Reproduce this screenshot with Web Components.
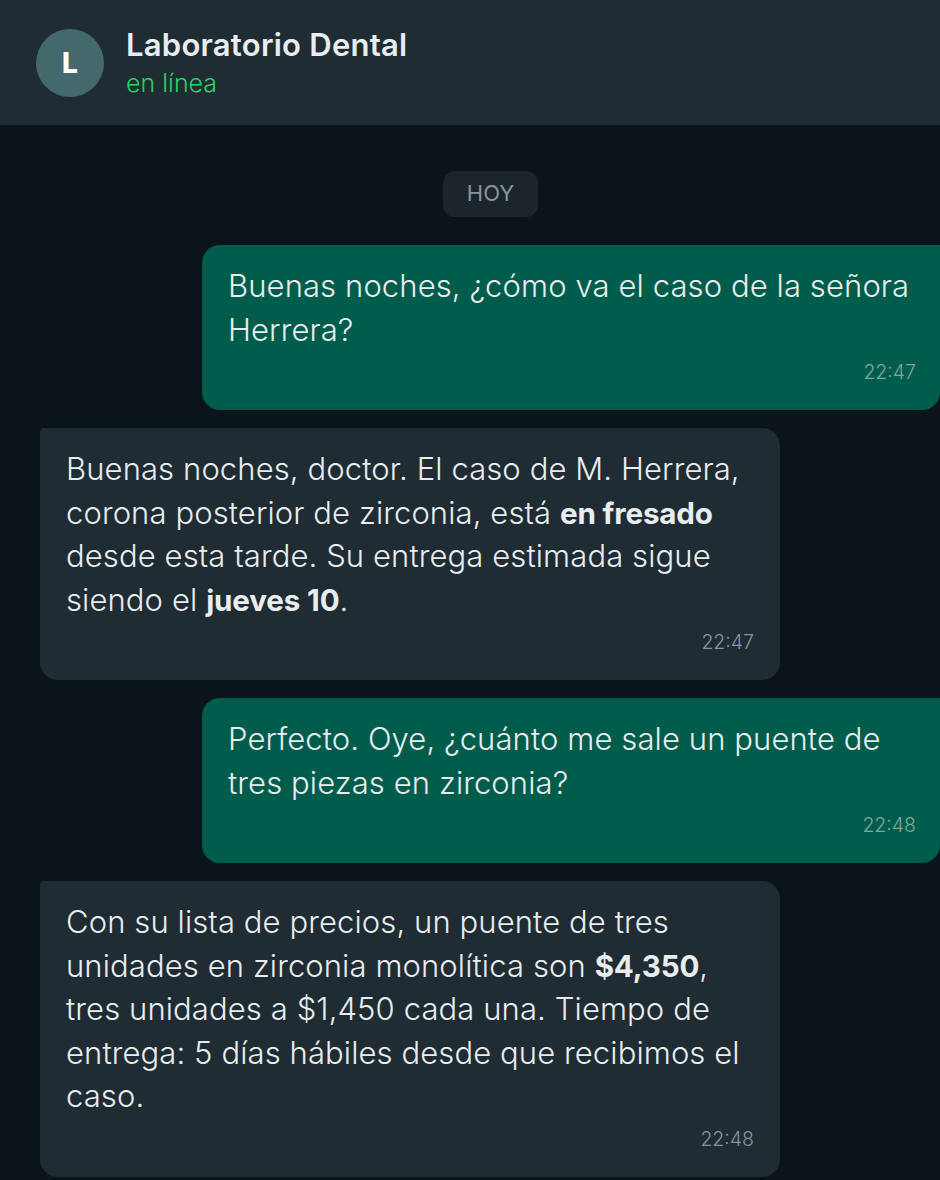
<!doctype html>
<html><head><meta charset="utf-8"><style>
html,body{margin:0;background:#0b141a;height:1180px;overflow:hidden}
body{font-family:"Inter","Lato",sans-serif}
</style></head><body>
<chat-app>
<chat-header slot="header" name="Laboratorio Dental" status="en línea" initial="L"></chat-header>
<chat-day>HOY</chat-day>
<chat-msg out time="22:47">Buenas noches, ¿cómo va el caso de la señora Herrera?</chat-msg>
<chat-msg time="22:47">Buenas noches, doctor. El caso de M. Herrera, corona posterior de zirconia, está <b>en fresado</b> desde esta tarde. Su entrega estimada sigue siendo el <b>jueves 10</b>.</chat-msg>
<chat-msg out time="22:48">Perfecto. Oye, ¿cuánto me sale un puente de tres piezas en zirconia?</chat-msg>
<chat-msg time="22:48">Con su lista de precios, un puente de tres unidades en zirconia monolítica son <b>$4,350</b>, tres unidades a $1,450 cada una. Tiempo de entrega: 5 días hábiles desde que recibimos el caso.</chat-msg>
</chat-app>
<script>
function def(name,css,html){customElements.define(name,class extends HTMLElement{connectedCallback(){if(this.shadowRoot)return;const r=this.attachShadow({mode:'open'});r.innerHTML='<style>'+css+'</style>'+(typeof html==='function'?html(this):html);}});}
const esc=s=>String(s||'').replace(/[&<>]/g,c=>({'&':'&amp;','<':'&lt;','>':'&gt;'}[c]));
def('chat-app',`:host{display:flex;flex-direction:column;width:940px;height:1180px;overflow:hidden;background:#0b141a;color:#e9edef}
.log{display:flex;flex-direction:column;gap:18px;padding:46px 0 0 40px}`,
`<slot name="header"></slot><div class="log"><slot></slot></div>`);
def('chat-header',`:host{display:flex;align-items:center;gap:22px;height:125px;box-sizing:border-box;padding:0 36px;background:#202c33}
.av{width:68px;height:68px;border-radius:50%;background:#44696d;display:flex;align-items:center;justify-content:center;color:#fff;font-weight:800;font-size:28px}
.tx{padding-top:2px}
.n{font-size:31px;font-weight:600;line-height:36px;color:#e9edef;letter-spacing:.25px;margin-top:-2px}
.s{font-size:25px;font-weight:350;line-height:30px;color:#25d366;margin-top:5px}`,
h=>`<div class="av">${esc(h.getAttribute('initial'))}</div><div class="tx"><div class="n">${esc(h.getAttribute('name'))}</div><div class="s">${esc(h.getAttribute('status'))}</div></div>`);
def('chat-day',`:host{display:block;align-self:center;margin:0 0 10px 1px;padding:10px 23.5px;height:26px;line-height:25px;border-radius:12px;background:#1b252b;color:#8696a0;font-size:22px;font-weight:400}`,`<slot></slot>`);
def('chat-msg',`:host{display:block;box-sizing:border-box;width:740px;padding:19px 26px 25px;border-radius:4px 18px 18px 18px;background:#202c33;color:#e9edef;font-size:31px;line-height:43.5px;font-weight:300;letter-spacing:.1px}
:host([out]){background:#005c4b;margin-left:162px;border-radius:18px 0 18px 18px;padding-right:24px;width:738px}
.t{display:block;text-align:right;font-size:19.5px;font-weight:300;line-height:26px;color:#8696a0;margin-top:8px;letter-spacing:0}
:host([out]) .t{color:#7fa8a0}
::slotted(b){font-weight:700;color:#e9edef;font-size:29.6px;letter-spacing:-.15px;line-height:0}`,
h=>`<slot></slot><span class="t">${esc(h.getAttribute('time'))}</span>`);
</script></body></html>
